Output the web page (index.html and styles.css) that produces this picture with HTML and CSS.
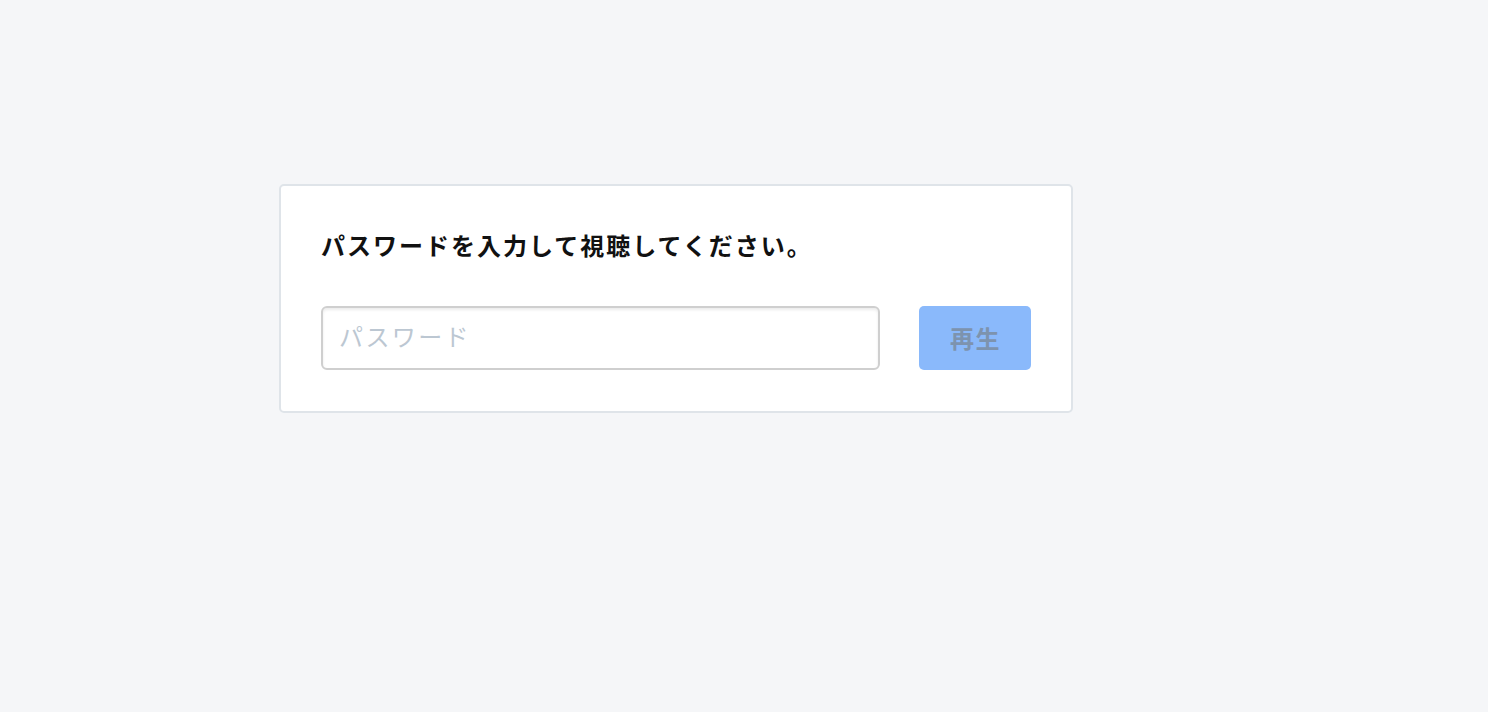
FILE: index.html
```html
<!DOCTYPE html>
<html lang="ja">
<head>
<meta charset="utf-8">
<title>パスワード</title>
<link rel="stylesheet" href="styles.css">
</head>
<body>
<main class="page">
  <section class="card">
    <h1 class="title">パスワードを入力して視聴してください。</h1>
    <form class="row">
      <input class="field" type="password" placeholder="パスワード">
      <button class="play" type="button" disabled>再生</button>
    </form>
  </section>
</main>
</body>
</html>
```
FILE: styles.css
```css
html, body {
  margin: 0;
  padding: 0;
  background: #f5f6f8;
  font-family: "Noto Sans CJK JP", "Noto Sans", sans-serif;
}
.page {
  padding: 184px 0 0 279px;
}
.card {
  box-sizing: border-box;
  width: 794px;
  background: #ffffff;
  border: 2px solid #dfe4e9;
  border-radius: 5px;
  padding: 38px 39px 41px 40px;
}
.title {
  margin: 0;
  font-size: 24px;
  font-weight: 700;
  line-height: 42px;
  letter-spacing: 2px;
  color: #111;
}
.row {
  display: flex;
  align-items: stretch;
  gap: 39px;
  margin-top: 40px;
}
.field {
  width: 559px;
  height: 64px;
  box-sizing: border-box;
  border: 2px solid #cfcfcf;
  border-radius: 6px;
  box-shadow: inset 0 2px 3px rgba(0,0,0,0.08);
  padding: 0 16px 5px 16px;
  font-family: inherit;
  font-size: 24px;
  letter-spacing: 2.4px;
  outline: none;
  background: #fff;
}
.field::placeholder {
  color: #bcc7d2;
}
.play {
  width: 112px;
  height: 64px;
  border: none;
  border-radius: 5px;
  background: #8ab9fb;
  color: #7d93ae;
  font-family: inherit;
  font-size: 24px;
  font-weight: 700;
  letter-spacing: 1.5px;
  padding: 0 0 2px 1px;
}
```
